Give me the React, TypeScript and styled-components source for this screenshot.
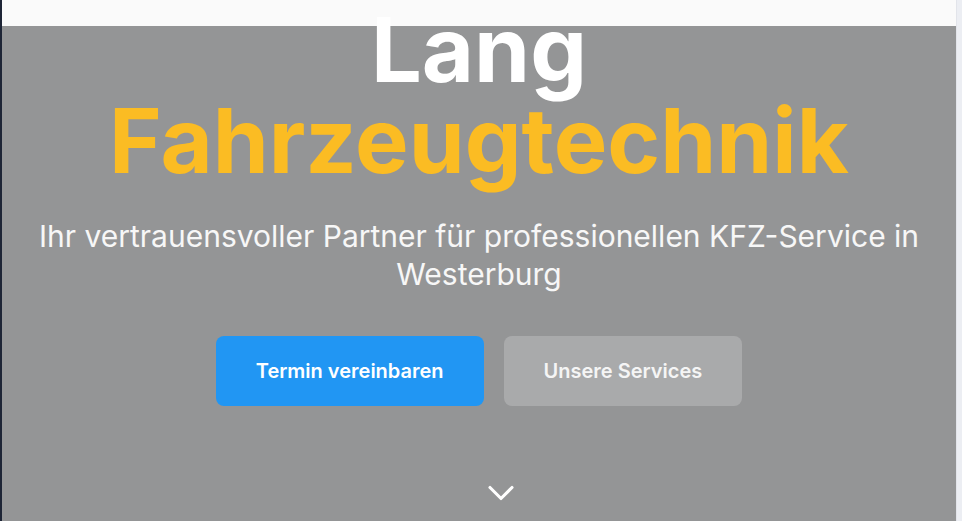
import React from "react";
import styled, { createGlobalStyle } from "styled-components";
import { ChevronDown } from "lucide-react";

const Global = createGlobalStyle`
  html, body { margin: 0; padding: 0; height: 100%; overflow: hidden; }
  body { font-family: Inter, "Noto Sans", sans-serif; background: #eceef3; }
  #root { height: 100%; }
`;

const Frame = styled.div`
  display: flex;
  height: 521px;
  width: 962px;
  overflow: hidden;
`;

const LeftEdge = styled.div`
  width: 2px;
  flex: none;
  background: #1e2536;
`;

const ScrollTrack = styled.div`
  width: 5px;
  flex: none;
  background: #eceef3;
  border-left: 1px solid #e2e4ea;
`;

const Main = styled.main`
  position: relative;
  flex: 1;
  overflow: hidden;
  background: #949596;
`;

const Header = styled.header`
  position: absolute;
  top: 0;
  left: 0;
  right: 0;
  height: 26px;
  background: #fafafa;
  z-index: 1;
`;

const Hero = styled.section`
  position: relative;
  z-index: 2;
  display: flex;
  flex-direction: column;
  align-items: center;
  padding-top: 4px;
  text-align: center;
`;

const Title = styled.h1`
  margin: 0;
  font-weight: 700;
  font-size: 90px;
  line-height: 91px;
  letter-spacing: 0;
`;

const TitleLine = styled.span<{ $accent?: boolean }>`
  display: block;
  color: ${(p) => (p.$accent ? "#fbbc23" : "#ffffff")};
`;

const Subtitle = styled.p`
  margin: 31px 0 0;
  max-width: 896px;
  font-size: 30px;
  line-height: 38px;
  font-weight: 400;
  color: #f7f7f7;
`;

const Actions = styled.div`
  display: flex;
  gap: 20px;
  margin-top: 43px;
`;

const Button = styled.a<{ $variant: "primary" | "ghost" }>`
  display: flex;
  align-items: center;
  justify-content: center;
  height: 70px;
  padding: 0 40px;
  box-sizing: border-box;
  border-radius: 8px;
  font-size: 20px;
  font-weight: 600;
  text-decoration: none;
  color: ${(p) => (p.$variant === "primary" ? "#ffffff" : "#f5f5f5")};
  background: ${(p) => (p.$variant === "primary" ? "#2196f3" : "#a9aaab")};
`;

const ScrollHint = styled.div`
  position: absolute;
  left: 50%;
  bottom: 6px;
  color: #ffffff;
  z-index: 2;
  display: flex;
`;

export default function App() {
  return (
    <>
      <Global />
      <Frame>
        <LeftEdge />
        <Main>
          <Header />
          <Hero>
            <Title>
              <TitleLine>Lang</TitleLine>
              <TitleLine $accent>Fahrzeugtechnik</TitleLine>
            </Title>
            <Subtitle>
              Ihr vertrauensvoller Partner für professionellen KFZ-Service in Westerburg
            </Subtitle>
            <Actions>
              <Button $variant="primary" href="#termin">Termin vereinbaren</Button>
              <Button $variant="ghost" href="#services">Unsere Services</Button>
            </Actions>
          </Hero>
          <ScrollHint>
            <ChevronDown size={44} strokeWidth={1.7} />
          </ScrollHint>
        </Main>
        <ScrollTrack />
      </Frame>
    </>
  );
}
